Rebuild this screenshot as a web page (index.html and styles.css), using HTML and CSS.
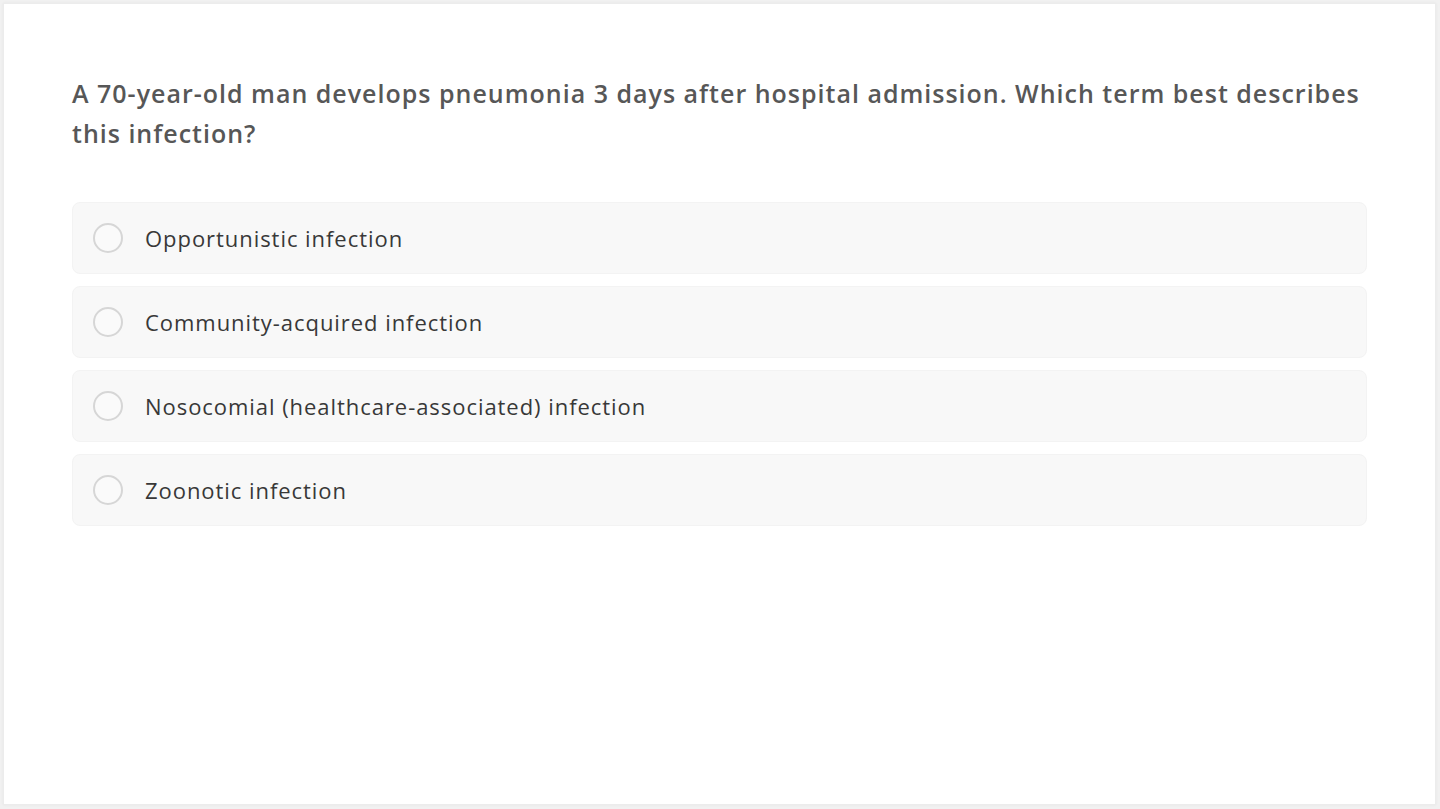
FILE: index.html
```html
<!DOCTYPE html>
<html lang="en">
<head>
<meta charset="utf-8">
<title>Question</title>
<link rel="stylesheet" href="styles.css">
</head>
<body>
<main class="card">
  <h1 class="question">A 70-year-old man develops pneumonia 3 days after hospital admission. Which term best describes this infection?</h1>
  <ul class="options">
    <li class="option"><span class="radio"></span><span class="label">Opportunistic infection</span></li>
    <li class="option"><span class="radio"></span><span class="label">Community-acquired infection</span></li>
    <li class="option"><span class="radio"></span><span class="label">Nosocomial (healthcare-associated) infection</span></li>
    <li class="option"><span class="radio"></span><span class="label">Zoonotic infection</span></li>
  </ul>
</main>
</body>
</html>
```
FILE: styles.css
```css
html, body {
  margin: 0;
  padding: 0;
  height: 100%;
}
body {
  background: #f1f1f1;
  font-family: "Open Sans", "Liberation Sans", sans-serif;
  padding: 3px 4px 4px 3px;
  box-sizing: border-box;
}
.card {
  box-sizing: border-box;
  height: 100%;
  background: #ffffff;
  border: 1px solid #ececec;
  box-shadow: 0 0 3px rgba(0,0,0,0.05);
  padding: 69px 68px 0 68px;
}
.question {
  margin: 0;
  font-size: 25px;
  font-weight: 600;
  line-height: 40px;
  letter-spacing: 1px;
  color: #575757;
}
.options {
  list-style: none;
  margin: 49px 0 0 0;
  padding: 0;
  display: flex;
  flex-direction: column;
  gap: 12px;
}
.option {
  display: flex;
  align-items: center;
  gap: 22px;
  height: 72px;
  box-sizing: border-box;
  padding: 0 20px;
  background: #f8f8f8;
  border: 1px solid #f3f3f3;
  border-radius: 8px;
}
.radio {
  flex: none;
  width: 30px;
  height: 30px;
  box-sizing: border-box;
  border: 2px solid #d6d6d6;
  border-radius: 50%;
  background: #fafafa;
}
.label {
  font-size: 22px;
  color: #383838;
  letter-spacing: 0.95px;
}
```
